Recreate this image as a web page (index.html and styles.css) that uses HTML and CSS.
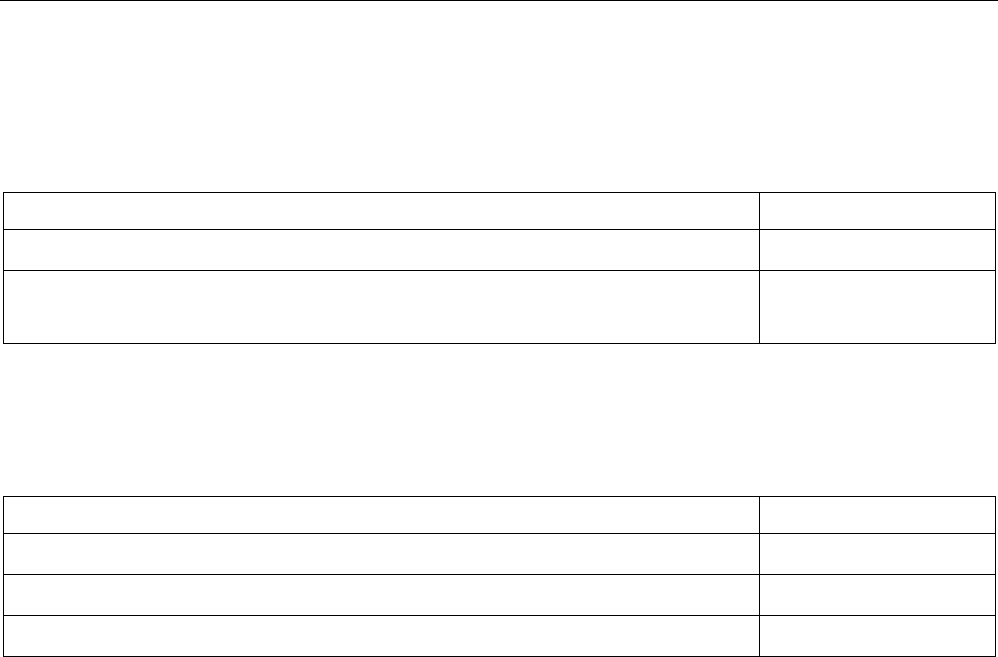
FILE: index.html
```html
<!DOCTYPE html>
<html lang="en">
<head>
<meta charset="utf-8">
<title>Tables</title>
<link rel="stylesheet" href="styles.css">
</head>
<body>
<div class="page">
  <div class="rule"></div>
  <section class="block block-first">
    <table class="grid">
      <tr class="row-head"><td class="c1"></td><td class="c2"></td></tr>
      <tr class="row"><td class="c1"></td><td class="c2"></td></tr>
      <tr class="row-tall"><td class="c1"></td><td class="c2"></td></tr>
    </table>
  </section>
  <section class="block block-second">
    <table class="grid">
      <tr class="row-head"><td class="c1"></td><td class="c2"></td></tr>
      <tr class="row"><td class="c1"></td><td class="c2"></td></tr>
      <tr class="row"><td class="c1"></td><td class="c2"></td></tr>
      <tr class="row"><td class="c1"></td><td class="c2"></td></tr>
    </table>
  </section>
</div>
</body>
</html>
```

FILE: styles.css
```css
html, body {
  margin: 0;
  padding: 0;
  background: #ffffff;
  font-family: "Liberation Sans", Arial, sans-serif;
  font-size: 14px;
  color: #000;
}

.page {
  display: flex;
  flex-direction: column;
}

.rule {
  height: 0;
  border-top: 1px solid #000;
}

.block {
  padding: 0 2px 0 3px;
}

.block-first {
  margin-top: 191px;
}

.block-second {
  margin-top: 152px;
}

.grid {
  border-collapse: separate;
  border-spacing: 0;
  border-top: 1px solid #000;
  border-left: 1px solid #000;
  width: 993px;
  table-layout: fixed;
}

.grid td {
  box-sizing: border-box;
  padding: 0;
  border-right: 1px solid #000;
  border-bottom: 1px solid #000;
}

.grid .c1 {
  width: 756px;
}

.grid .c2 {
  width: 236px;
}

.row-head td {
  height: 37px;
}

.row td {
  height: 41px;
}

.row-tall td {
  height: 73px;
}
```
